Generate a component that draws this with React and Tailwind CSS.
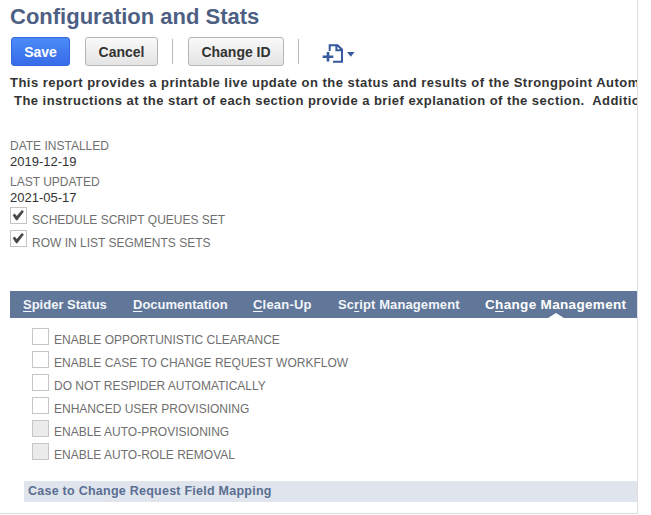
const TABS = [
  { pre: '', key: 'S', post: 'pider Status', cls: 'w-[110px]' },
  { pre: '', key: 'D', post: 'ocumentation', cls: 'w-[120px]' },
  { pre: '', key: 'C', post: 'lean-Up', cls: 'w-[85px] tracking-[0.2px]' },
  { pre: 'Sc', key: 'r', post: 'ipt Management', cls: 'w-[147px] tracking-[0.1px]' },
  { pre: 'C', key: 'h', post: 'ange Management', cls: 'w-[142px] text-[13.5px] text-white tracking-[0.33px]', active: true },
];

const OPTIONS = [
  { label: 'ENABLE OPPORTUNISTIC CLEARANCE' },
  { label: 'ENABLE CASE TO CHANGE REQUEST WORKFLOW' },
  { label: 'DO NOT RESPIDER AUTOMATICALLY' },
  { label: 'ENHANCED USER PROVISIONING' },
  { label: 'ENABLE AUTO-PROVISIONING', disabled: true },
  { label: 'ENABLE AUTO-ROLE REMOVAL', disabled: true },
];

function Button({ children, className }) {
  return (
    <button className={`h-[29px] rounded-[3px] border pt-px text-[14px] leading-[26px] font-bold ${className}`}>
      {children}
    </button>
  );
}

function Divider({ className }) {
  return <div className={`h-[25px] w-px bg-[#b9b9b9] ${className}`} />;
}

function Checked({ label }) {
  return (
    <div className="flex h-[23px] items-start">
      <span className="flex h-[17px] w-[17px] justify-center border border-[#c4c4c4] bg-white">
        <svg width="15" height="15" viewBox="0 0 15 15">
          <path d="M1.7 7.2L3.6 5.6L5.7 8.1L10.9 2L12.9 3.4L6.3 12.2H5.1Z" fill="#484848" />
        </svg>
      </span>
      <span className="ml-[5px] pt-[5px] leading-[16px]">{label}</span>
    </div>
  );
}

export default function App() {
  return (
    <div className="h-[515px] w-[651px] overflow-hidden bg-white font-['Liberation_Sans',Arial,sans-serif] text-[12px] whitespace-nowrap text-[#6f6f6f]">
      <div className="h-[514px] w-[638px] overflow-hidden border-r border-b border-[#dfdfe2] pl-[10px]">
        <h1 className="pt-[3px] text-[22px] leading-[28px] font-bold text-[#4d5f83]">Configuration and Stats</h1>
        <div className="mt-[6px] flex h-[29px] items-center pl-px">
          <Button className="w-[59px] border-[#3567df] bg-linear-to-b from-[#4b8bf8] to-[#386be8] text-white">Save</Button>
          <Button className="ml-[15px] w-[73px] border-[#b5b5b5] bg-linear-to-b from-[#f9f9f9] to-[#e4e4e4] text-[#333]">Cancel</Button>
          <Divider className="ml-[14px]" />
          <Button className="ml-[15px] w-[96px] border-[#b5b5b5] bg-linear-to-b from-[#f9f9f9] to-[#e4e4e4] text-[#333]">Change ID</Button>
          <Divider className="ml-[14px]" />
          <svg className="mt-[4px] ml-[23px]" width="36" height="22" viewBox="0 0 36 22">
            <path d="M7.7 8V2.2H15.5L20 6.5V18.8H11M14.4 2.5V7.2H19.8" fill="none" stroke="#35599c" strokeWidth="2" />
            <path d="M6 9V18.5M0.7 13.7H11.3" fill="none" stroke="#35599c" strokeWidth="2.6" />
            <path d="M25 9H32.5L28.8 13.8Z" fill="#35599c" />
          </svg>
        </div>
        <div className="mt-[8px] text-[13px] leading-[17.5px] font-bold whitespace-pre text-[#333]">
          <div className="tracking-[0.475px]">This report provides a printable live update on the status and results of the Strongpoint Autom</div>
          <div className="tracking-[0.453px]">{' The instructions at the start of each section provide a brief explanation of the section.  Additio'}</div>
        </div>
        <div className="mt-[30px] leading-[15px]">
          <div>DATE INSTALLED</div>
          <div className="text-[13px] text-[#333]">2019-12-19</div>
          <div className="mt-[6px]">LAST UPDATED</div>
          <div className="text-[13px] text-[#333]">2021-05-17</div>
        </div>
        <div className="mt-[2px]">
          <Checked label="SCHEDULE SCRIPT QUEUES SET" />
          <Checked label="ROW IN LIST SEGMENTS SETS" />
        </div>
        <div className="mt-[38px] flex h-[27px] bg-[#607799] pl-[13px] text-[13px] leading-[28px] font-bold text-[#f2f5fa]">
          {TABS.map((t) => (
            <div key={t.post} className={`relative shrink-0 ${t.cls}`}>
              {t.pre}
              <span className="underline underline-offset-2">{t.key}</span>
              {t.post}
              {t.active && (
                <svg className="absolute bottom-0 left-[63px]" width="16" height="5" viewBox="0 0 16 5">
                  <path d="M0 5L8 0L16 5Z" fill="#fff" />
                </svg>
              )}
            </div>
          ))}
        </div>
        <div className="mt-[10px] pl-[22px]">
          {OPTIONS.map((o) => (
            <div key={o.label} className="flex h-[23px] items-start">
              <span className={`h-[17px] w-[17px] border border-[#c6c6c6] ${o.disabled ? 'bg-[#ebebeb]' : 'bg-white'}`} />
              <span className="ml-[5px] pt-[4px] leading-[16px]">{o.label}</span>
            </div>
          ))}
        </div>
        <div className="mt-[15px] ml-[14px] h-[21px] bg-[#e0e4ec] pl-[4px] text-[12.5px] leading-[21px] font-bold tracking-[0.25px] text-[#5a6f93]">
          Case to Change Request Field Mapping
        </div>
      </div>
    </div>
  );
}
